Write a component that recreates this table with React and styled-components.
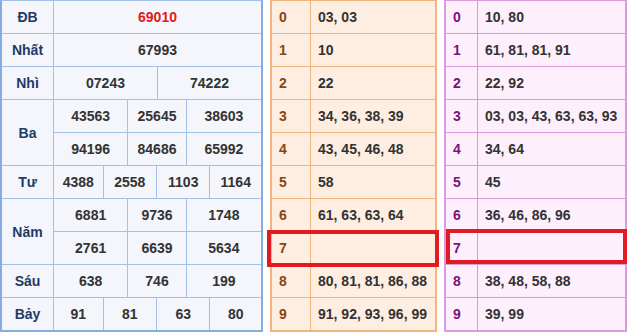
import React from 'react';
import styled, { createGlobalStyle } from 'styled-components';

const Global = createGlobalStyle`
  body {
    margin: 0;
    background: #fff;
    font-family: "Liberation Sans", Arial, sans-serif;
  }
`;

// whole strip: results on the left, two loto tables beside it
const Page = styled.div`
  display: flex;
  gap: 7px;
  width: 627px;
  height: 335px;
  align-items: flex-start;
`;

// results table, lines come from the 1px gap over the border colour
const Results = styled.div`
  display: grid;
  grid-template-columns: 51px 207px;
  grid-auto-rows: 32px;
  gap: 1px;
  background: #a3c0e8;
  border: 2px solid #86ade0;
  border-top: 1px solid #a3c0e8;
  border-bottom-width: 2px;
`;

const Label = styled.div`
  grid-row: span ${(p) => p.span || 1};
  display: flex;
  align-items: center;
  justify-content: center;
  background: #f4f6fb;
  color: #1f3a68;
  font-weight: bold;
  font-size: 14px;
`;

const Cells = styled.div`
  display: grid;
  grid-template-columns: ${(p) => p.cols};
  gap: 1px;
  background: #a3c0e8;
`;

const Num = styled.div`
  display: flex;
  align-items: center;
  justify-content: center;
  background: #f4f6fb;
  color: ${(p) => (p.special ? '#e3191c' : '#333')};
  font-weight: bold;
  font-size: 14px;
`;

// loto tables (head / tail)
const Loto = styled.div`
  position: relative;
  display: grid;
  grid-template-columns: ${(p) => p.head}px 1fr;
  grid-auto-rows: 32px;
  width: ${(p) => p.w}px;
  gap: 1px;
  background: ${(p) => p.line};
  border: 2px solid ${(p) => p.line};
  border-top-width: 1px;
  box-sizing: border-box;
  height: 332px;
`;

const Digit = styled.div`
  display: flex;
  align-items: center;
  padding-left: ${(p) => p.pad}px;
  background: ${(p) => p.bg};
  color: ${(p) => p.color};
  font-weight: bold;
  font-size: 14px;
`;

const List = styled.div`
  display: flex;
  align-items: center;
  padding-left: 7px;
  background: ${(p) => p.bg};
  color: #333;
  font-weight: bold;
  font-size: 14px;
  white-space: nowrap;
`;

// red frame drawn over the empty "7" row
const Mark = styled.div`
  position: absolute;
  left: ${(p) => p.x}px;
  top: ${(p) => p.y}px;
  width: ${(p) => p.w}px;
  height: ${(p) => p.h}px;
  border: 4px solid #e11b22;
  box-sizing: border-box;
  pointer-events: none;
`;

const prizes = [
  { label: 'ĐB', rows: [['69010']], cols: '1fr', special: true },
  { label: 'Nhất', rows: [['67993']], cols: '1fr' },
  { label: 'Nhì', rows: [['07243', '74222']], cols: '1fr 1fr' },
  { label: 'Ba', rows: [['43563', '25645', '38603'], ['94196', '84686', '65992']], cols: '74fr 58fr 75fr' },
  { label: 'Tư', rows: [['4388', '2558', '1103', '1164']], cols: '49fr 53fr 53fr 51fr' },
  { label: 'Năm', rows: [['6881', '9736', '1748'], ['2761', '6639', '5634']], cols: '74fr 58fr 75fr' },
  { label: 'Sáu', rows: [['638', '746', '199']], cols: '74fr 58fr 75fr' },
  { label: 'Bảy', rows: [['91', '81', '63', '80']], cols: '49fr 53fr 53fr 51fr' },
];

const heads = [
  '03, 03', '10', '22', '34, 36, 38, 39', '43, 45, 46, 48',
  '58', '61, 63, 63, 64', '', '80, 81, 81, 86, 88', '91, 92, 93, 96, 99',
];

const tails = [
  '10, 80', '61, 81, 81, 91', '22, 92', '03, 03, 43, 63, 63, 93', '34, 64',
  '45', '36, 46, 86, 96', '', '38, 48, 58, 88', '39, 99',
];

const LotoTable = ({ data, w, head, line, bg, color, pad, mark }) => (
  <Loto w={w} head={head} line={line}>
    {data.map((v, i) => (
      <React.Fragment key={i}>
        <Digit bg={bg} color={color} pad={pad}>{i}</Digit>
        <List bg={bg}>{v}</List>
      </React.Fragment>
    ))}
    <Mark {...mark} />
  </Loto>
);

export default function App() {
  return (
    <>
      <Global />
      <Page>
        <Results>
          {prizes.map((p) => (
            <React.Fragment key={p.label}>
              <Label span={p.rows.length}>{p.label}</Label>
              {p.rows.map((r, i) => (
                <Cells key={i} cols={p.cols}>
                  {r.map((n, j) => (
                    <Num key={j} special={p.special}>{n}</Num>
                  ))}
                </Cells>
              ))}
            </React.Fragment>
          ))}
        </Results>
        <LotoTable
          data={heads}
          w={167}
          head={38}
          line="#f0b47c"
          bg="#feeee1"
          color="#8a4612"
          pad={7}
          mark={{ x: -5, y: 229, w: 172, h: 37 }}
        />
        <LotoTable
          data={tails}
          w={183}
          head={31}
          line="#d99bd9"
          bg="#fdeffc"
          color="#7a137a"
          pad={7}
          mark={{ x: 0, y: 228, w: 181, h: 35 }}
        />
      </Page>
    </>
  );
}
